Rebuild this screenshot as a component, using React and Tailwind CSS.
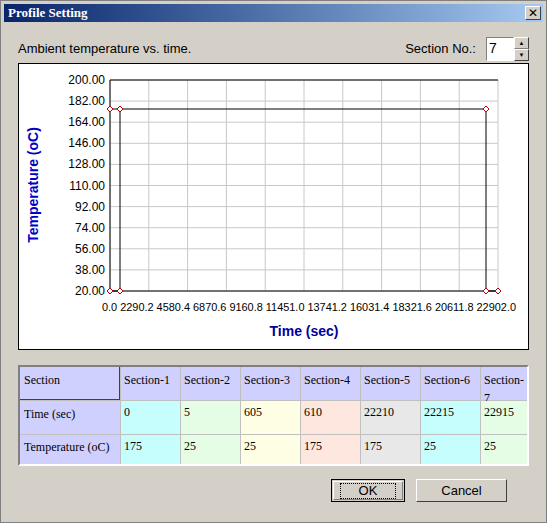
export default function App() {
  const W = 509, H = 285;
  // plot coordinates relative to panel (panel at x=18,y=67)
  const px0 = 91, px1 = 479, py0 = 16, py1 = 227;
  const yl = ["200.00","182.00","164.00","146.00","128.00","110.00","92.00","74.00","56.00","38.00","20.00"];
  const xl = ["0.0","2290.2","4580.4","6870.6","9160.8","11451.0","13741.2","16031.4","18321.6","20611.8","22902.0"];
  const gx = i => px0 + (px1 - px0) * i / 10;
  const gy = i => py0 + (py1 - py0) * i / 10;
  const hy = 45, ax = 101, bx = 467;
  const pts = [[px0,hy],[ax,hy],[px0,py1],[ax,py1],[bx,hy],[bx,py1],[px1,py1]];
  const cols = ["Section-1","Section-2","Section-3","Section-4","Section-5","Section-6","Section-7"];
  const times = ["0","5","605","610","22210","22215","22915"];
  const temps = ["175","25","25","175","175","25","25"];
  const bg = ["bg-[#c6fefe]","bg-[#e5fde5]","bg-[#fefee5]","bg-[#fde7de]","bg-[#e8e8e8]","bg-[#c6fefe]","bg-[#e5fde5]"];
  const sans = { fontFamily: '"Liberation Sans", Arial, sans-serif' };
  const serif = { fontFamily: '"Liberation Serif", "Times New Roman", serif' };
  return (
    <div className="w-[547px] h-[523px] bg-[#d4d0c8] border border-[#808080] flex flex-col" style={sans}>
      <div className="h-[18px] mx-[3px] mt-[3px] flex items-center justify-between pl-[4px] pr-[2px] bg-gradient-to-r from-[#0a246a] to-[#a6caf0]">
        <span className="text-white font-bold text-[13px]" style={serif}>Profile Setting</span>
        <div className="w-[16px] h-[14px] bg-[#d4d0c8] border border-t-white border-l-white border-r-[#404040] border-b-[#404040] flex items-center justify-center text-[12px] leading-none text-black">✕</div>
      </div>
      <div className="flex items-center justify-between pl-[17px] pr-[17px] mt-[15px] h-[24px]">
        <span className="text-[13px] text-black">Ambient temperature vs. time.</span>
        <div className="flex items-center">
          <span className="text-[13px] text-black mr-[10px]">Section No.:</span>
          <div className="w-[28px] h-[24px] bg-white border border-t-[#808080] border-l-[#808080] border-r-white border-b-white text-[14px] pl-[2px] leading-[20px]">7</div>
          <div className="flex flex-col w-[15px] h-[24px]">
            <div className="flex-1 bg-[#d4d0c8] border border-t-white border-l-white border-r-[#404040] border-b-[#808080] text-[6px] leading-none flex items-center justify-center">▲</div>
            <div className="flex-1 bg-[#d4d0c8] border border-t-white border-l-white border-r-[#404040] border-b-[#404040] text-[6px] leading-none flex items-center justify-center">▼</div>
          </div>
        </div>
      </div>
      <div className="mx-[17px] mt-[2px] w-[511px] h-[287px] bg-white border border-black">
        <svg width={W} height={H} style={sans}>
          {Array.from({length: 11}).map((_, i) => (
            <g key={i}>
              <line x1={gx(i)} y1={py0} x2={gx(i)} y2={py1} stroke="#c8c8c8" />
              <line x1={px0} y1={gy(i)} x2={px1} y2={gy(i)} stroke="#c8c8c8" />
              <text x={px0 - 5} y={gy(i) + 4} textAnchor="end" fontSize="12" fill="#000">{yl[i]}</text>
            </g>
          ))}
          <text x={gx(0) - 8} y={py1 + 20} fontSize="11" fill="#000" textLength={px1 - px0 + 26} lengthAdjust="spacingAndGlyphs">{xl.join(" ")}</text>
          <polyline points={`${px0},${py1} ${px0},${py0} ${px1},${py0}`} fill="none" stroke="#000" />
          <polyline points={`${px0},${py1} ${px1},${py1}`} fill="none" stroke="#000" />
          <polyline points={`${px0},${py1} ${ax},${py1} ${ax},${hy} ${bx},${hy} ${bx},${py1} ${px1},${py1}`} fill="none" stroke="#000" />
          <line x1={px0} y1={hy} x2={ax} y2={hy} stroke="#000" />
          {pts.map(([x, y], i) => (
            <path key={i} d={`M${x-3},${y} L${x},${y-3} L${x+3},${y} L${x},${y+3} Z`} fill="white" stroke="#c00000" />
          ))}
          <text x={285} y={272} textAnchor="middle" fontSize="14" fontWeight="bold" fill="#0000a0">Time (sec)</text>
          <text transform="translate(19,121) rotate(-90)" textAnchor="middle" fontSize="14" fontWeight="bold" fill="#0000c8">Temperature (oC)</text>
        </svg>
      </div>
      <div className="mx-[17px] mt-[15px] w-[511px] border-2 border-t-[#808080] border-l-[#808080] border-r-white border-b-white bg-white" style={serif}>
        <div className="grid grid-cols-[100px_repeat(6,59px)_1fr] text-[12px] text-black gap-px bg-[#c0c0c0]">
          <div className="bg-[#d0d0ff] h-[33px] pl-[4px] pt-[4px] border-r border-b border-[#404040]">Section</div>
          {cols.map(c => <div key={c} className="bg-[#d0d0ff] h-[33px] pl-[3px] pt-[4px]">{c}</div>)}
          <div className="bg-[#d0d0ff] h-[33px] pl-[4px] pt-[4px]">Time (sec)</div>
          {times.map((t, i) => <div key={i} className={`${bg[i]} h-[33px] pl-[3px] pt-[2px]`}>{t}</div>)}
          <div className="bg-[#d0d0ff] h-[29px] pl-[4px] pt-[3px]">Temperature (oC)</div>
          {temps.map((t, i) => <div key={i} className={`${bg[i]} h-[29px] pl-[3px] pt-[2px]`}>{t}</div>)}
        </div>
      </div>
      <div className="flex justify-end gap-[11px] pr-[39px] mt-[13px]">
        <div className="w-[74px] h-[23px] bg-[#d4d0c8] border border-black p-[1px]">
          <div className="w-full h-full border border-t-white border-l-white border-r-[#808080] border-b-[#808080] flex items-center justify-center">
            <div className="border border-dotted border-black px-[18px] text-[13px] leading-[14px]">OK</div>
          </div>
        </div>
        <div className="w-[91px] h-[23px] bg-[#d4d0c8] border border-t-white border-l-white border-r-[#404040] border-b-[#404040] flex items-center justify-center text-[13px]">Cancel</div>
      </div>
    </div>
  );
}
